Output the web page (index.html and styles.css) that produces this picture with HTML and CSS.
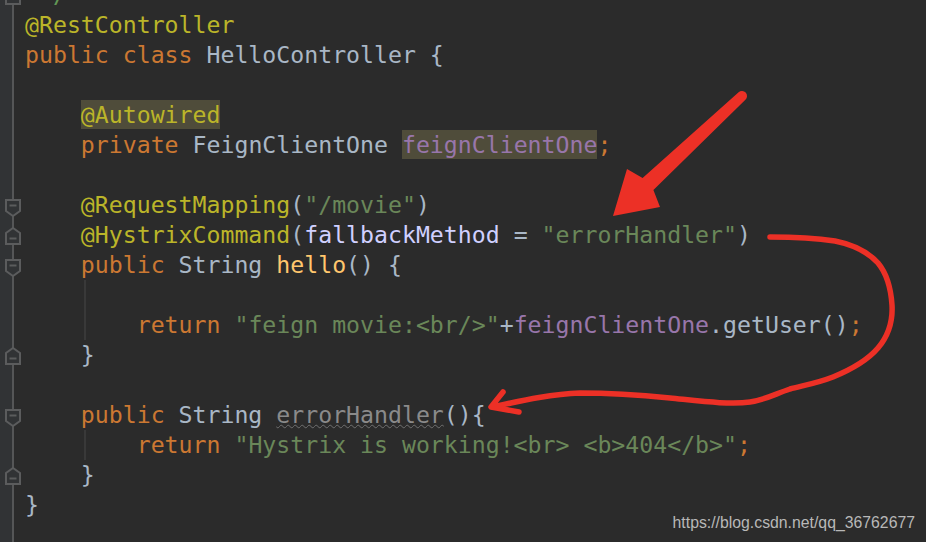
FILE: index.html
```html
<!DOCTYPE html>
<html lang="en">
<head>
<meta charset="utf-8">
<title>HelloController.java</title>
<link rel="stylesheet" href="styles.css">
</head>
<body>

<div class="editor">
  <div class="gutter">
    <div class="fold end"><svg width="16" height="18" viewBox="0 0 16 18"><path class="mk" d="M1 17H15V6L8 1L1 6Z"/><path class="mk" d="M4.5 11.5H11.5"/></svg></div>
    <div class="fold"></div>
    <div class="fold"></div>
    <div class="fold"></div>
    <div class="fold"></div>
    <div class="fold"></div>
    <div class="fold"></div>
    <div class="fold start"><svg width="16" height="18" viewBox="0 0 16 18"><path class="mk" d="M1 1H15V12L8 17L1 12Z"/><path class="mk" d="M4.5 6.5H11.5"/></svg></div>
    <div class="fold end"><svg width="16" height="18" viewBox="0 0 16 18"><path class="mk" d="M1 17H15V6L8 1L1 6Z"/><path class="mk" d="M4.5 11.5H11.5"/></svg></div>
    <div class="fold start"><svg width="16" height="18" viewBox="0 0 16 18"><path class="mk" d="M1 1H15V12L8 17L1 12Z"/><path class="mk" d="M4.5 6.5H11.5"/></svg></div>
    <div class="fold"></div>
    <div class="fold"></div>
    <div class="fold end"><svg width="16" height="18" viewBox="0 0 16 18"><path class="mk" d="M1 17H15V6L8 1L1 6Z"/><path class="mk" d="M4.5 11.5H11.5"/></svg></div>
    <div class="fold"></div>
    <div class="fold start"><svg width="16" height="18" viewBox="0 0 16 18"><path class="mk" d="M1 1H15V12L8 17L1 12Z"/><path class="mk" d="M4.5 6.5H11.5"/></svg></div>
    <div class="fold"></div>
    <div class="fold end"><svg width="16" height="18" viewBox="0 0 16 18"><path class="mk" d="M1 17H15V6L8 1L1 6Z"/><path class="mk" d="M4.5 11.5H11.5"/></svg></div>
    <div class="fold"></div>
    <div class="fold"></div>
  </div>
  <div class="code">
    <div class="line"><span class="cmt"> */</span></div>
    <div class="line"><span class="ann">@RestController</span></div>
    <div class="line"><span class="kw">public class</span> HelloController {</div>
    <div class="line"></div>
    <div class="line">    <span class="ann hl">@Autowired</span></div>
    <div class="line">    <span class="kw">private</span> FeignClientOne <span class="fld hl">feignClientOne</span><span class="kw">;</span></div>
    <div class="line"></div>
    <div class="line">    <span class="ann">@RequestMapping</span>(<span class="str">"/movie"</span>)</div>
    <div class="line">    <span class="ann">@HystrixCommand</span>(<span class="par">fallbackMethod</span> = <span class="str">"errorHandler"</span>)</div>
    <div class="line">    <span class="kw">public</span> String <span class="mth">hello</span>() {</div>
    <div class="line guide"></div>
    <div class="line guide">        <span class="kw">return</span> <span class="str">"feign movie:&lt;br/&gt;"</span>+<span class="fld">feignClientOne</span>.getUser()<span class="kw">;</span></div>
    <div class="line">    }</div>
    <div class="line"></div>
    <div class="line">    <span class="kw">public</span> String <span class="unused">errorHandler</span>(){</div>
    <div class="line guide">        <span class="kw">return</span> <span class="str">"Hystrix is working!&lt;br&gt; &lt;b&gt;404&lt;/b&gt;"</span><span class="kw">;</span></div>
    <div class="line">    }</div>
    <div class="line">}</div>
    <div class="line"></div>
  </div>
</div>

<svg class="marks" width="926" height="542" viewBox="0 0 926 542">
  <path class="arrow" d="M738.6 92.3A5 5 0 0 1 745.4 99.7L653.4 189.9L660 207L613 216L627 169L642.6 178.1Z"/>
  <path class="scribble" d="M770 237C790 237 815 238 835 241C855 245 868 252 878 263C888 275 891 290 892 305C893 322 888 336 878 348C866 362 850 370 833 377C815 384 800 386 790 389C775 394 765 400 750 402C730 405 700 401 670 398C640 395 610 393 580 393C550 394 520 401 492 407M503 392L491 407L519 412"/>
</svg>

<div class="watermark">https://blog.csdn.net/qq_36762677</div>

</body>
</html>
```

FILE: styles.css
```css
body {
	margin: 0;
	width: 926px;
	height: 542px;
	overflow: hidden;
	position: relative;
	background: #2b2b2b;
}
.editor {
	display: flex;
	margin-top: -20px;
}
.gutter {
	flex: none;
	width: 25px;
	display: flex;
	flex-direction: column;
	background: linear-gradient(to right, #313335 0 12px, #555657 12px 14px, transparent 14px);
}
.fold {
	height: 30px;
}
.fold svg {
	display: block;
	margin-left: 5px;
}
.fold.start svg {
	margin-top: 9px;
}
.fold.end svg {
	margin-top: 7px;
}
.mk {
	fill: #313335;
	stroke: #5b5c5d;
	stroke-width: 2;
}
.code {
	font-family: "DejaVu Sans Mono", monospace;
	font-size: 23.2px;
	line-height: 30px;
	color: #a9b7c6;
}
.line {
	height: 30px;
	white-space: pre;
}
.guide {
	background: linear-gradient(#393939, #393939) 59px 0 / 2px 100% no-repeat;
}
.kw {
	color: #cc7832;
}
.ann {
	color: #bbb529;
}
.str {
	color: #6a8759;
}
.fld {
	color: #9876aa;
}
.mth {
	color: #ffc66d;
}
.par {
	color: #d0d0ff;
}
.cmt {
	color: #629755;
}
.hl {
	background: #4f4c3a;
	padding: 1px 0;
}
.unused {
	color: #8a8a8a;
	text-decoration: underline wavy #6f6f6f;
	text-decoration-thickness: 1px;
	text-underline-offset: 1px;
}
.marks {
	position: absolute;
	left: 0;
	top: 0;
	pointer-events: none;
}
.arrow {
	fill: #ec3026;
}
.scribble {
	fill: none;
	stroke: #ec3026;
	stroke-width: 5.5;
	stroke-linecap: round;
	stroke-linejoin: round;
}
.watermark {
	position: absolute;
	right: 11px;
	top: 514px;
	font-family: "Liberation Sans", Arial, sans-serif;
	font-size: 15.8px;
	line-height: 18px;
	color: #b8b8b8;
}
```
